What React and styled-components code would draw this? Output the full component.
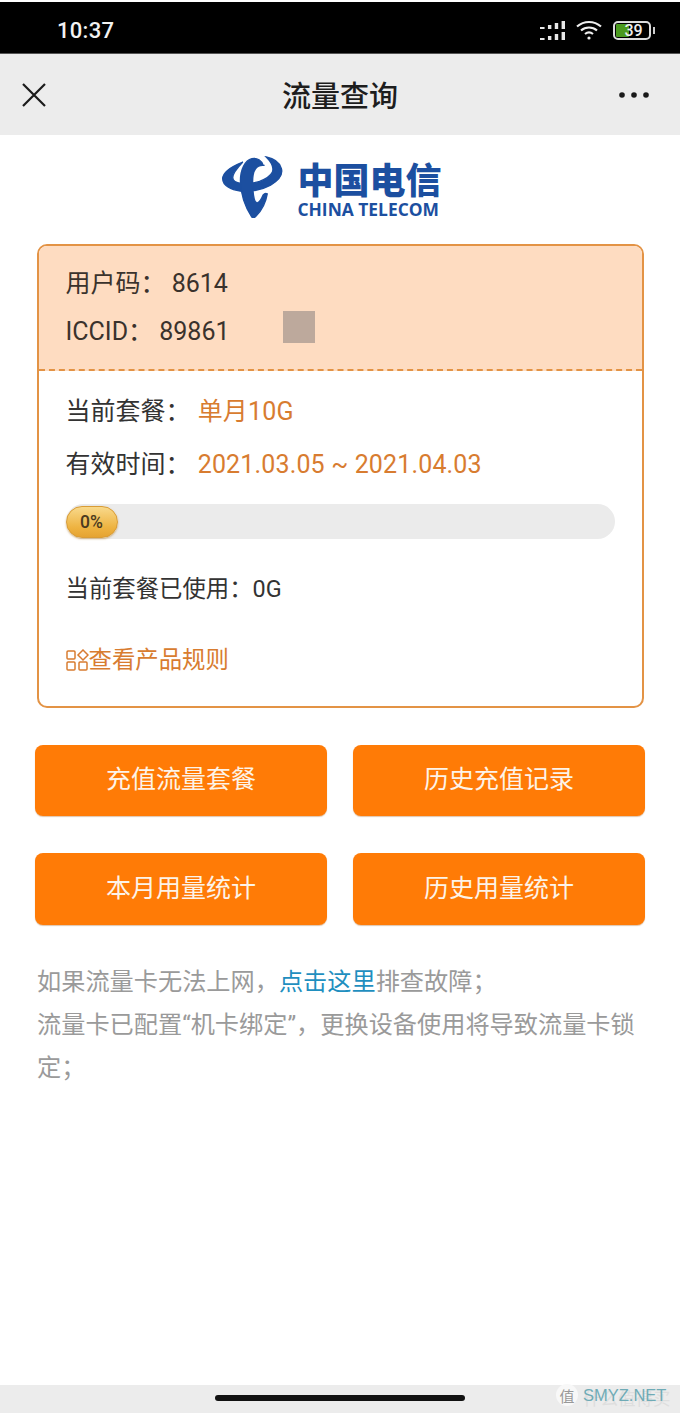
import React from "react";
import styled, { createGlobalStyle } from "styled-components";

const Global = createGlobalStyle`
  html, body { margin: 0; padding: 0; background: #fff; }
  body { font-family: Roboto, "Noto Sans CJK SC", sans-serif; }
  * { box-sizing: border-box; }
`;
const Page = styled.div`
  width: 680px; height: 1413px; display: flex; flex-direction: column; padding-top: 2px; overflow: hidden;
`;
const StatusBar = styled.div`
  height: 52px; flex: none; background: #000; color: #f2f2f2; display: flex; align-items: center;
  justify-content: space-between; padding: 5px 29px 0 57px; border-bottom: 1px solid #555;
`;
const Time = styled.span` font-size: 22px; font-weight: 500; letter-spacing: .3px; `;
const StatusIcons = styled.div` display: flex; align-items: center; gap: 11px; `;
const NavBar = styled.div`
  height: 81px; flex: none; background: #ececec; display: grid; grid-template-columns: 1fr auto 1fr; align-items: center;
  padding: 0 31px;
`;
const NavSide = styled.div`
  display: flex; justify-content: ${(p) => (p.$end ? "flex-end" : "flex-start")}; margin-left: ${(p) => (p.$end ? "0" : "-10px")};
`;
const NavTitle = styled.h1`
  margin: 4px 0 0; font-size: 29px; line-height: 40px; font-weight: 500; color: #1d1d1d;
`;
const Main = styled.main` flex: 1; display: flex; flex-direction: column; align-items: center; padding-top: 21px; `;
const Logo = styled.div` display: flex; align-items: flex-start; gap: 13px; height: 63px; margin: 0 16px 25px 0; `;
const LogoWords = styled.div` display: flex; flex-direction: column; align-items: stretch; color: #1c4fa0; `;
const LogoCn = styled.div`
  font-size: 36px; line-height: 44px; font-weight: 900; white-space: nowrap;
  font-family: "Noto Sans CJK SC", sans-serif;
`;
const LogoEn = styled.div`
  font-family: "Open Sans", sans-serif; font-size: 17.4px; line-height: 17px; font-weight: 700; white-space: nowrap; margin-top: 1px;
`;
const Card = styled.section`
  width: 607px; height: 464px; border: 2px solid #e39345; border-radius: 10px; overflow: hidden; flex: none;
`;
const CardHead = styled.div`
  height: 125px; background: #fedcc1; border-bottom: 2px dashed #e39345; padding: 16px 0 0 27px;
  display: flex; flex-direction: column; gap: 4px; position: relative;
`;
const HeadRow = styled.div` font-size: 25px; line-height: 44px; color: #3a322c; white-space: nowrap; `;
const Redaction = styled.div`
  position: absolute; left: 244px; top: 65px; width: 32px; height: 32px; background: #bda99c;
`;
const CardBody = styled.div` padding: 14px 27px 0; display: flex; flex-direction: column; `;
const InfoRow = styled.div` font-size: 25px; line-height: 53px; color: #333; white-space: nowrap; `;
const Accent = styled.span` color: #d87c30; margin-left: 1px; letter-spacing: .15px; `;
const Track = styled.div`
  width: 549px; height: 35px; border-radius: 18px; background: #ebebeb; margin-top: 13px; display: flex; align-items: center;
`;
const Pill = styled.div`
  width: 52px; height: 32px; border-radius: 16px; background: linear-gradient(#f8d98b, #eeb23f 70%, #e5a332);
  border: 1px solid #d99c35; box-shadow: 0 1px 2px rgba(170,110,20,.5);
  display: flex; align-items: center; justify-content: center; font-size: 17.5px; font-weight: 500; color: #4a3a20;
`;
const UsedRow = styled.div` font-size: 23.4px; line-height: 40px; color: #333; margin-top: 30px; white-space: nowrap; `;
const RuleLink = styled.div`
  display: flex; align-items: center; font-size: 23.4px; line-height: 40px; color: #d87c30; margin-top: 31px; white-space: nowrap;
`;
const Buttons = styled.div`
  width: 610px; display: grid; grid-template-columns: 292px 292px; column-gap: 26px; row-gap: 37px; margin-top: 37px;
`;
const ActionButton = styled.button`
  height: ${(p) => (p.$tall ? "72px" : "71px")}; border: 0; border-radius: 8px; background: #ff7b06; color: #fdf3e8; font-family: inherit; font-size: 25px;
  padding: 0 0 7px; box-shadow: 0 1px 1px rgba(160,90,20,.35);
`;
const Notes = styled.div`
  width: 606px; margin-top: 36px; font-size: 24.2px; line-height: 43px; color: #9a9a9a;
`;
const Link = styled.span` color: #1f8fbf; `;
const Bottom = styled.div`
  height: 28px; flex: none; background: #ececec; display: flex; justify-content: center; padding-top: 10px; position: relative; margin-top: auto;
`;
const HomePill = styled.div` width: 250px; height: 6px; border-radius: 3px; background: #111; `;
const Watermark = styled.div`
  position: absolute; left: 556px; top: -1px; display: flex; align-items: center; gap: 5px;
`;
const WmBadge = styled.div`
  width: 22px; height: 22px; border-radius: 50%; background: #f8f8f8; color: #999; font-size: 15px; display: flex;
  align-items: center; justify-content: center;
`;
const WmFaint = styled.div`
  position: absolute; left: 27px; top: 4px; font-size: 17.5px; line-height: 20px; color: #dedede; white-space: nowrap;
  font-family: "Noto Sans CJK SC", sans-serif;
`;
const WmText = styled.div`
  position: relative; font-family: "Liberation Sans", sans-serif; font-size: 16.5px; color: #6fabb6; line-height: 22px; white-space: nowrap;
`;

const Signal = () => (
  <svg width="25" height="19" viewBox="0 0 22 19" preserveAspectRatio="none" fill="#e8e8e8" aria-hidden="true">
    <rect x="0" y="6" width="4" height="2" /><rect x="7" y="4" width="3" height="4" /><rect x="13" y="2" width="3" height="6" /><rect x="19" y="0" width="3" height="8" />
    <rect x="0" y="17" width="4" height="2" /><rect x="7" y="15" width="3" height="4" /><rect x="13" y="13" width="3" height="6" /><rect x="19" y="11" width="3" height="8" />
  </svg>
);
const Wifi = () => (
  <svg width="26" height="20" viewBox="0 0 26 20" fill="none" stroke="#eee" strokeWidth="2.2" aria-hidden="true">
    <path d="M1 6.500C8 .5 18 .5 25 6.500" /><path d="M5 10.500c4.500-4 11.500-4 16 0" /><path d="M9 14c2.500-2 5.500-2 8 0" />
    <circle cx="13" cy="18" r="1.600" fill="#eee" stroke="none" />
  </svg>
);
const BatteryBox = styled.div`
  width: 38px; height: 19px; border: 2px solid #ddd; border-radius: 5px; position: relative; display: flex;
  align-items: center; justify-content: center; font-size: 16px; font-weight: 500; line-height: 15px; color: #eee;
  &::after { content: ""; position: absolute; right: -6px; top: 4px; width: 2px; height: 7px; background: #ccc; }
`;
const BatteryFill = styled.span`
  position: absolute; left: 1px; top: 1px; bottom: 1px; width: 13px; background: #4a9a1e; border-radius: 1px;
`;
const BatteryNum = styled.span` position: relative; padding-left: 3px; `;

const Close = () => (
  <svg width="26" height="26" viewBox="0 0 26 26" stroke="#1a1a1a" strokeWidth="2.200" aria-hidden="true">
    <path d="M2 2l22 22M24 2L2 24" />
  </svg>
);
const More = () => (
  <svg width="30" height="8" viewBox="0 0 30 8" fill="#1a1a1a" aria-hidden="true">
    <circle cx="3" cy="4" r="2.800" /><circle cx="15" cy="4" r="2.800" /><circle cx="27" cy="4" r="2.800" />
  </svg>
);
const LogoMark = () => (
  <svg width="62" height="62" viewBox="13 10 185 185" fill="#1c4fa0" stroke="#1c4fa0" strokeWidth="4" aria-hidden="true">
    <path d="M75 28C40 42 15 58 15 78c0 20 25 33 53 37 30 2 65-4 90-18 24-14 38-30 32-50-6-20-25-30-45-34 14 14 24 32 18 46-6 12-20 20-38 27-17 5-38 7-55 6-14-2-25-8-25-18 0-14 15-30 30-46z" />
    <path d="M136 38c-4-14-18-24-34-20-20 5-34 32-34 66 0 38 14 80 34 108 4 4 8 2 12-2 18-18 30-42 34-67-3-2-8-2-12 3-5 12-11 23-18 24-8 1-11-18-13-40-2-26-1-50 8-62 6-8 14-12 27-10z" />
  </svg>
);
const RuleIcon = () => (
  <svg width="23" height="22" viewBox="0 0 23 22" fill="none" stroke="#d87c30" strokeWidth="1.500" aria-hidden="true">
    <rect x="1" y="2" width="8" height="8" rx="1" /><path d="M17 1l5 5-5 5-5-5z" />
    <rect x="1" y="13" width="8" height="8" rx="1" /><rect x="13" y="13" width="8" height="8" rx="1" />
  </svg>
);

export default function App() {
  return (
    <Page>
      <Global />
      <StatusBar>
        <Time>10:37</Time>
        <StatusIcons>
          <Signal /><Wifi />
          <BatteryBox><BatteryFill /><BatteryNum>39</BatteryNum></BatteryBox>
        </StatusIcons>
      </StatusBar>
      <NavBar>
        <NavSide><Close /></NavSide>
        <NavTitle>流量查询</NavTitle>
        <NavSide $end><More /></NavSide>
      </NavBar>
      <Main>
        <Logo>
          <LogoMark />
          <LogoWords>
            <LogoCn>中国电信</LogoCn>
            <LogoEn>CHINA TELECOM</LogoEn>
          </LogoWords>
        </Logo>
        <Card>
          <CardHead>
            <HeadRow>用户码： 8614</HeadRow>
            <HeadRow>ICCID： 89861</HeadRow>
            <Redaction />
          </CardHead>
          <CardBody>
            <InfoRow>当前套餐： <Accent>单月10G</Accent></InfoRow>
            <InfoRow>有效时间： <Accent>2021.03.05 ~ 2021.04.03</Accent></InfoRow>
            <Track><Pill>0%</Pill></Track>
            <UsedRow>当前套餐已使用：0G</UsedRow>
            <RuleLink><RuleIcon />查看产品规则</RuleLink>
          </CardBody>
        </Card>
        <Buttons>
          <ActionButton>充值流量套餐</ActionButton>
          <ActionButton>历史充值记录</ActionButton>
          <ActionButton $tall>本月用量统计</ActionButton>
          <ActionButton $tall>历史用量统计</ActionButton>
        </Buttons>
        <Notes>
          如果流量卡无法上网，<Link>点击这里</Link>排查故障；<br />
          流量卡已配置“机卡绑定”，更换设备使用将导致流量卡锁定；
        </Notes>
      </Main>
      <Bottom>
        <HomePill />
        <Watermark>
          <WmBadge>值</WmBadge>
          <WmFaint>什么值得买</WmFaint>
          <WmText>SMYZ.NET</WmText>
        </Watermark>
      </Bottom>
    </Page>
  );
}
